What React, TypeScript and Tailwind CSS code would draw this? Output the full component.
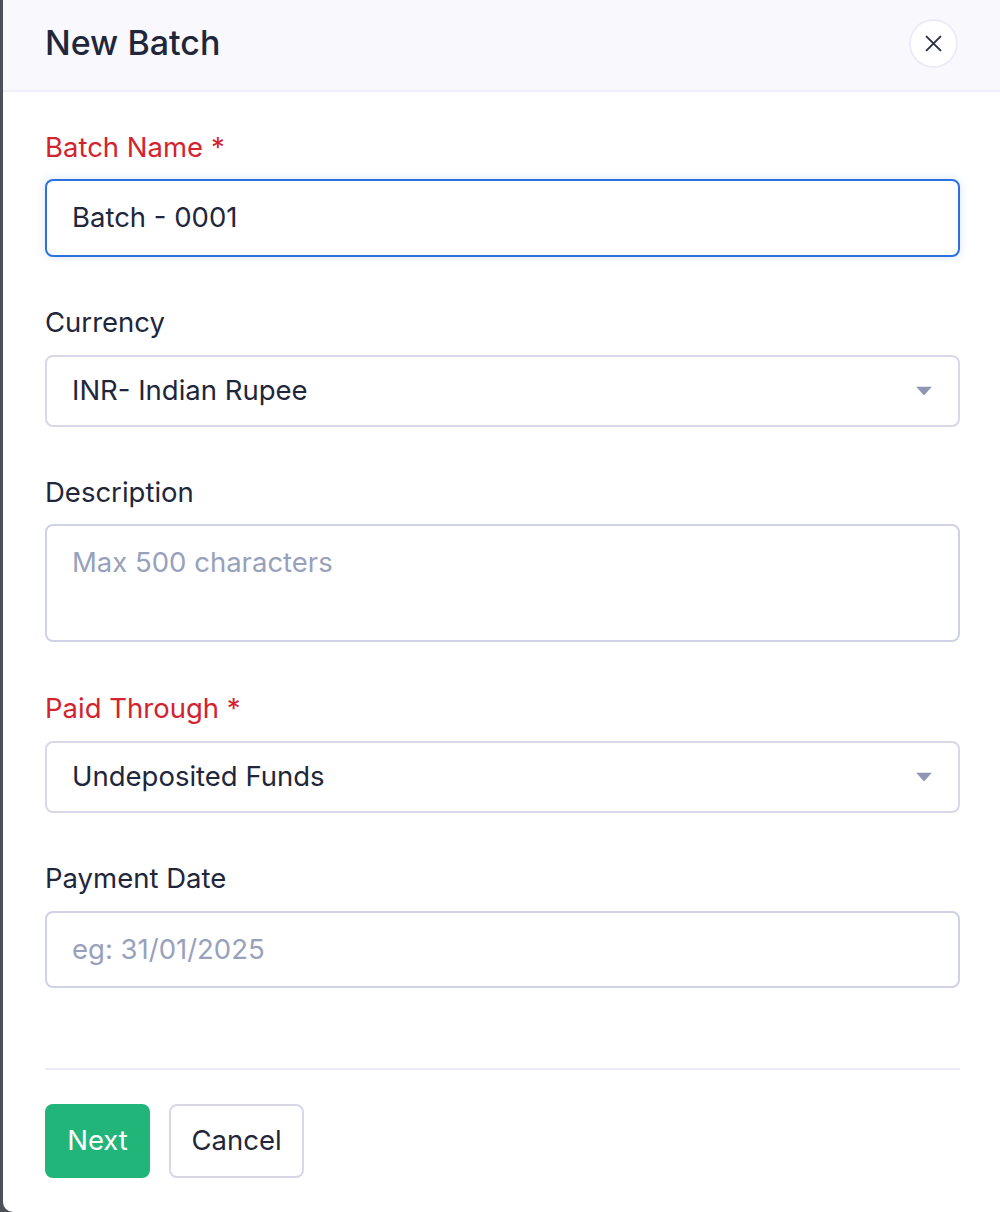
import React from "react";

function Caret() {
  return (
    <svg width="16" height="9" viewBox="0 0 16 9" className="absolute right-[26px] top-1/2 -translate-y-1/2">
      <path d="M0 0 H16 L8 9 Z" fill="#8f96b3" />
    </svg>
  );
}

export default function App() {
  return (
    <div className="flex h-[1212px] w-[1000px] overflow-hidden bg-[#4d5058]" style={{ fontFamily: "Inter, 'Noto Sans', sans-serif" }}>
      <div className="ml-[3px] flex h-full flex-1 flex-col rounded-bl-[10px] bg-white">
        <div className="flex h-[92px] items-center justify-between border-b-2 border-[#efeff9] bg-[#f8f8fd] pl-[42px] pr-[42px]">
          <h1 className="pb-[5px] text-[34px] font-medium text-[#21263b]">New Batch</h1>
          <button className="mb-[4px] flex h-[49px] w-[49px] items-center justify-center rounded-full border-2 border-[#ececf7] bg-white">
            <svg width="17" height="17" viewBox="0 0 16 16">
              <path d="M1.5 1.5 L14.5 14.5 M14.5 1.5 L1.5 14.5" stroke="#2a2f45" strokeWidth="1.8" strokeLinecap="round" />
            </svg>
          </button>
        </div>
        <div className="flex flex-col pl-[42px] pr-[40px] pt-[35px] text-[27.5px] text-[#21263b]">
          <label className="h-[40px] leading-[40px] text-[#d3232f]">Batch Name *</label>
          <div className="mt-[12px] flex h-[78px] items-center rounded-[8px] border-2 border-[#2b72e0] pl-[25px] shadow-[0_0_10px_rgba(43,114,224,0.18)]">
            Batch - 0001
          </div>

          <label className="mt-[45px] h-[40px] leading-[40px]">Currency</label>
          <div className="relative mt-[13px] flex h-[72px] items-center rounded-[8px] border-2 border-[#d8d8e8] pl-[25px]">
            INR- Indian Rupee
            <Caret />
          </div>

          <label className="mt-[45px] h-[40px] leading-[40px]">Description</label>
          <div className="mt-[12px] h-[118px] rounded-[8px] border-2 border-[#cfd2e4] pl-[25px] pt-[16px] leading-[40px] text-[#98a1bc]">
            Max 500 characters
          </div>

          <label className="mt-[46px] h-[40px] leading-[40px] text-[#d3232f]">Paid Through *</label>
          <div className="relative mt-[13px] flex h-[72px] items-center rounded-[8px] border-2 border-[#d8d8e8] pl-[25px]">
            Undeposited Funds
            <Caret />
          </div>

          <label className="mt-[45px] h-[40px] leading-[40px]">Payment Date</label>
          <div className="mt-[13px] flex h-[77px] items-center rounded-[8px] border-2 border-[#cfd2e4] pl-[25px] text-[#98a1bc]">
            eg: 31/01/2025
          </div>

          <div className="mt-[80px] h-[2px] bg-[#ececf6]" />

          <div className="mt-[34px] flex gap-[19px]">
            <button className="flex h-[74px] w-[105px] items-center justify-center rounded-[8px] bg-[#22b57a] text-white">
              Next
            </button>
            <button className="flex h-[74px] w-[135px] items-center justify-center rounded-[8px] border-2 border-[#d7d7e8] bg-white text-[#21263b]">
              Cancel
            </button>
          </div>
        </div>
      </div>
    </div>
  );
}
